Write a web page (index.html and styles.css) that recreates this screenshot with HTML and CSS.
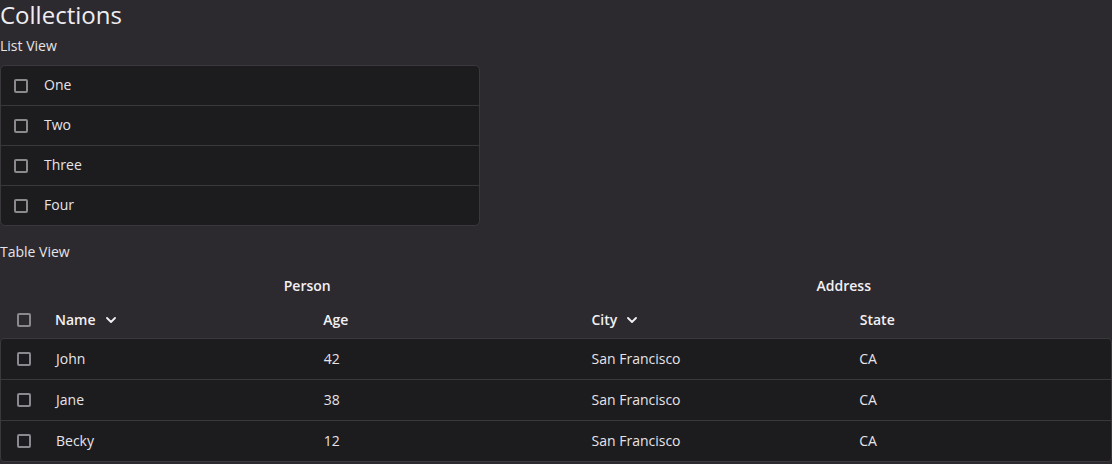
FILE: index.html
```html
<!DOCTYPE html>
<html lang="en">
<head>
<meta charset="utf-8">
<title>Collections</title>
<link rel="stylesheet" href="styles.css">
</head>
<body>
  <h1 class="title">Collections</h1>

  <div class="section-label">List View</div>
  <ul class="listbox">
    <li class="list-item"><span class="checkbox"></span><span class="item-text">One</span></li>
    <li class="list-item"><span class="checkbox"></span><span class="item-text">Two</span></li>
    <li class="list-item"><span class="checkbox"></span><span class="item-text">Three</span></li>
    <li class="list-item"><span class="checkbox"></span><span class="item-text">Four</span></li>
  </ul>

  <div class="section-label table-label">Table View</div>
  <div class="table">
    <div class="head-group">
      <div class="cell"></div>
      <div class="group-cell span-2">Person</div>
      <div class="group-cell span-2">Address</div>
    </div>
    <div class="head-row">
      <div class="cell check-cell"><span class="checkbox"></span></div>
      <div class="cell col-head">Name <svg class="chev" width="10" height="6" viewBox="0 0 10 6"><path d="M1 1 L5 5 L9 1" fill="none" stroke="currentColor" stroke-width="1.8" stroke-linecap="round" stroke-linejoin="round"/></svg></div>
      <div class="cell col-head">Age</div>
      <div class="cell col-head">City <svg class="chev" width="10" height="6" viewBox="0 0 10 6"><path d="M1 1 L5 5 L9 1" fill="none" stroke="currentColor" stroke-width="1.8" stroke-linecap="round" stroke-linejoin="round"/></svg></div>
      <div class="cell col-head">State</div>
    </div>
    <div class="table-body">
      <div class="row">
        <div class="cell check-cell"><span class="checkbox"></span></div>
        <div class="cell">John</div>
        <div class="cell">42</div>
        <div class="cell">San Francisco</div>
        <div class="cell">CA</div>
      </div>
      <div class="row">
        <div class="cell check-cell"><span class="checkbox"></span></div>
        <div class="cell">Jane</div>
        <div class="cell">38</div>
        <div class="cell">San Francisco</div>
        <div class="cell">CA</div>
      </div>
      <div class="row">
        <div class="cell check-cell"><span class="checkbox"></span></div>
        <div class="cell">Becky</div>
        <div class="cell">12</div>
        <div class="cell">San Francisco</div>
        <div class="cell">CA</div>
      </div>
    </div>
  </div>
</body>
</html>
```

FILE: styles.css
```css
* { box-sizing: border-box; }

body {
  margin: 0;
  background: #2c2a2e;
  color: #e6e4e8;
  font-family: "Open Sans", "Noto Sans", sans-serif;
  font-size: 14px;
}

.title {
  margin: 0;
  font-size: 24px;
  font-weight: 400;
  line-height: 30px;
  color: #efedf1;
}

.section-label {
  margin-top: 6px;
  font-size: 14px;
  line-height: 19px;
}

.table-label {
  margin-top: 16px;
}

.listbox {
  list-style: none;
  margin: 10px 0 0;
  padding: 0;
  width: 480px;
  background: #1c1b1e;
  border: 1px solid #3a383c;
  border-radius: 5px;
}

.list-item {
  height: 40px;
  display: flex;
  align-items: center;
  gap: 16px;
  padding-left: 13px;
  border-top: 1px solid #3a383c;
}

.list-item:first-child {
  height: 39px;
  border-top: none;
}

.item-text {
  padding-bottom: 3px;
}

.checkbox {
  display: inline-block;
  width: 14px;
  height: 14px;
  border: 2px solid #8b898d;
  border-radius: 2px;
  flex: none;
}

.table {
  margin-top: 9px;
  width: 1112px;
}

.head-group,
.head-row,
.row {
  display: grid;
  grid-template-columns: 39px repeat(4, 1fr);
  align-items: center;
}

.head-group { height: 32px; }
.head-row { height: 36px; }

.span-2 { grid-column: span 2; }

.group-cell {
  text-align: center;
  font-weight: 600;
  color: #f2f0f4;
  padding-bottom: 2px;
}

.cell {
  padding-left: 16px;
  padding-bottom: 2px;
  display: flex;
  align-items: center;
}

.check-cell { padding-left: 17px; padding-bottom: 0; }

.col-head {
  font-weight: 600;
  color: #f2f0f4;
  gap: 10px;
}

.chev { flex: none; margin-top: 2px; }

.table-body {
  background: #1c1b1e;
  border: 1px solid #3a383c;
  border-radius: 4px;
}

.table-body .row {
  height: 41px;
  border-top: 1px solid #3a383c;
}

.table-body .row:first-child {
  height: 40px;
  border-top: none;
}

.table-body .check-cell { padding-left: 16px; }
```
